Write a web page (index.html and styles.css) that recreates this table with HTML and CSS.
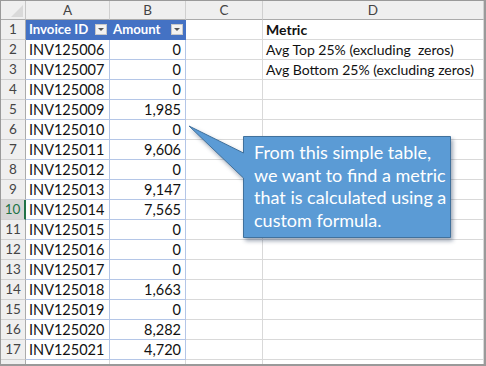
FILE: index.html
```html
<!DOCTYPE html>
<html>
<head>
<meta charset="utf-8">
<link rel="stylesheet" href="styles.css">
</head>
<body>
<div class="frame">
  <div class="sheet">
    <div class="corner"><span class="tri"></span></div>
    <div class="ch">A</div><div class="ch">B</div><div class="ch">C</div><div class="ch">D</div>

    <div class="rh">1</div>
    <div class="th"><span>Invoice ID</span><span class="dd"></span></div>
    <div class="th"><span>Amount</span><span class="dd"></span></div>
    <div class="c"></div><div class="c d bold">Metric</div>

    <div class="rh">2</div><div class="ta">INV125006</div><div class="tb">0</div><div class="c"></div><div class="c d">Avg Top 25% (excluding&nbsp; zeros)</div>
    <div class="rh">3</div><div class="ta">INV125007</div><div class="tb">0</div><div class="c"></div><div class="c d">Avg Bottom 25% (excluding zeros)</div>
    <div class="rh">4</div><div class="ta">INV125008</div><div class="tb">0</div><div class="c"></div><div class="c"></div>
    <div class="rh">5</div><div class="ta">INV125009</div><div class="tb">1,985</div><div class="c"></div><div class="c"></div>
    <div class="rh">6</div><div class="ta">INV125010</div><div class="tb">0</div><div class="c"></div><div class="c"></div>
    <div class="rh">7</div><div class="ta">INV125011</div><div class="tb">9,606</div><div class="c"></div><div class="c"></div>
    <div class="rh">8</div><div class="ta">INV125012</div><div class="tb">0</div><div class="c"></div><div class="c"></div>
    <div class="rh">9</div><div class="ta">INV125013</div><div class="tb">9,147</div><div class="c"></div><div class="c"></div>
    <div class="rh sel">10</div><div class="ta">INV125014</div><div class="tb">7,565</div><div class="c"></div><div class="c"></div>
    <div class="rh">11</div><div class="ta">INV125015</div><div class="tb">0</div><div class="c"></div><div class="c"></div>
    <div class="rh">12</div><div class="ta">INV125016</div><div class="tb">0</div><div class="c"></div><div class="c"></div>
    <div class="rh">13</div><div class="ta">INV125017</div><div class="tb">0</div><div class="c"></div><div class="c"></div>
    <div class="rh">14</div><div class="ta">INV125018</div><div class="tb">1,663</div><div class="c"></div><div class="c"></div>
    <div class="rh">15</div><div class="ta">INV125019</div><div class="tb">0</div><div class="c"></div><div class="c"></div>
    <div class="rh">16</div><div class="ta">INV125020</div><div class="tb">8,282</div><div class="c"></div><div class="c"></div>
    <div class="rh">17</div><div class="ta">INV125021</div><div class="tb">4,720</div><div class="c"></div><div class="c"></div>
    <div class="rh"></div><div class="c"></div><div class="c"></div><div class="c"></div><div class="c"></div>

    <svg class="callout-shape" width="486" height="366" viewBox="0 0 486 366">
      <path d="M243.5,136.5 H450.5 V237.5 H243.5 V178 L189,126 L243.5,153 Z" fill="#5b9bd5" stroke="#41719c" stroke-width="1"/>
    </svg>
    <div class="callout-text">From this simple table, we want to find a metric that is calculated using a custom formula.</div>
  </div>
</div>
</body>
</html>
```
FILE: styles.css
```css
html, body {
  margin: 0;
  padding: 0;
  background: #fff;
}
.frame {
  width: 486px;
  height: 366px;
  box-sizing: border-box;
  border: 1px solid #9a9a9a;
  border-right-width: 2px;
  border-bottom-width: 2px;
  overflow: hidden;
}
.sheet {
  position: relative;
  display: grid;
  grid-template-columns: 25px 84px 76px 77px 1fr;
  grid-template-rows: 19px repeat(18, 20px);
  font-family: Lato, "Liberation Sans", sans-serif;
  font-size: 14.5px;
  color: #111;
}
.sheet > div {
  box-sizing: border-box;
  border-right: 1px solid #d9d9d9;
  border-bottom: 1px solid #d9d9d9;
  white-space: nowrap;
  overflow: hidden;
  line-height: 19px;
}
.corner {
  position: relative;
  background: #efefef;
  border-right: 1px solid #c6c6c6 !important;
  border-bottom: 1px solid #ababab !important;
}
.tri {
  position: absolute;
  right: 2px;
  bottom: 2px;
  width: 0;
  height: 0;
  border-left: 12px solid transparent;
  border-bottom: 12px solid #d9d9d9;
}
.ch {
  background: #efefef;
  color: #444;
  text-align: center;
  font-size: 13.5px;
  border-right: 1px solid #d0d0d0 !important;
  border-bottom: 1px solid #ababab !important;
  line-height: 18px !important;
}
.rh {
  background: #efefef;
  color: #444;
  text-align: center;
  font-size: 13.5px;
  border-right: 1px solid #ababab !important;
  border-bottom: 1px solid #d0d0d0 !important;
}
.rh.sel {
  background: #d6d6d6;
  color: #217346;
  border-right: 2px solid #217346 !important;
}
.th {
  background: #4472c4;
  color: #fff;
  font-weight: bold;
  font-size: 13.2px;
  display: flex;
  align-items: center;
  justify-content: space-between;
  padding: 0 3px 0 3px;
  border-right: none !important;
  border-bottom: 1px solid #4472c4 !important;
}
.dd {
  position: relative;
  flex: none;
  width: 12px;
  height: 11px;
  background: #f2f2f2;
  border: 1px solid #c8c8c8;
  box-sizing: border-box;
}
.dd::after {
  content: "";
  position: absolute;
  left: 2px;
  top: 3px;
  border-left: 3px solid transparent;
  border-right: 3px solid transparent;
  border-top: 3px solid #555;
}
.ta {
  padding-left: 3px;
  border-right: 1px solid #b4c6e7 !important;
  border-bottom: 1px solid #b4c6e7 !important;
}
.tb {
  text-align: right;
  padding-right: 4px;
  border-right: 1px solid #b4c6e7 !important;
  border-bottom: 1px solid #b4c6e7 !important;
}
.c {
  padding-left: 3px;
}
.d {
  font-size: 14px;
}
.bold {
  font-weight: bold;
}
.callout-shape {
  position: absolute;
  left: -1px;
  top: -1px;
  filter: drop-shadow(2px 3px 2px rgba(40, 60, 90, 0.45));
  pointer-events: none;
}
.callout-text {
  position: absolute;
  left: 243px;
  top: 136px;
  width: 207px;
  height: 101px;
  padding: 4px 4px 0 10px;
  box-sizing: border-box;
  border: none !important;
  color: #fff;
  font-size: 18px;
  line-height: 22.5px !important;
  white-space: normal !important;
}
```
